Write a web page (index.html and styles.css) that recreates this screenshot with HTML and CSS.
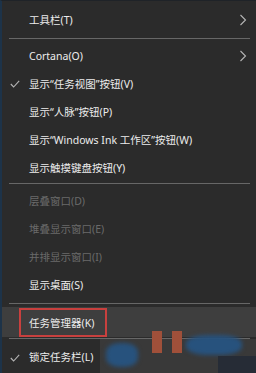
FILE: index.html
```html
<!DOCTYPE html>
<html lang="zh-CN">
<head>
    <meta charset="UTF-8">
    <title>任务栏菜单</title>
    <link rel="stylesheet" href="styles.css">
</head>
<body>
    <div class="menu">
        <div class="item first">工具栏(T)
            <svg class="arrow" width="8" height="12" viewBox="0 0 8 12"><polyline points="1.5,1 6.5,6 1.5,11" /></svg>
        </div>
        <div class="sep"></div>
        <div class="item">Cortana(O)
            <svg class="arrow" width="8" height="12" viewBox="0 0 8 12"><polyline points="1.5,1 6.5,6 1.5,11" /></svg>
        </div>
        <div class="item">
            <svg class="check" width="10" height="8" viewBox="0 0 10 8"><polyline points="0.8,4 3.6,7 9.2,0.8" /></svg>
            显示“任务视图”按钮(V)
        </div>
        <div class="item">显示“人脉”按钮(P)</div>
        <div class="item">显示“Windows Ink 工作区”按钮(W)</div>
        <div class="item">显示触摸键盘按钮(Y)</div>
        <div class="sep tight"></div>
        <div class="item off">层叠窗口(D)</div>
        <div class="item off">堆叠显示窗口(E)</div>
        <div class="item off">并排显示窗口(I)</div>
        <div class="item">显示桌面(S)</div>
        <div class="sep"></div>
        <div class="item hover"><span class="mark">任务管理器(K)</span></div>
        <div class="sep low"></div>
        <div class="item last">
            <svg class="check" width="10" height="8" viewBox="0 0 10 8"><polyline points="0.8,4 3.6,7 9.2,0.8" /></svg>
            锁定任务栏(L)
        </div>

        <div class="smudge">
            <div class="bar b1"></div>
            <div class="bar b2"></div>
            <div class="blob c1"></div>
            <div class="blob c2"></div>
            <div class="patch"></div>
        </div>
    </div>
</body>
</html>
```

FILE: styles.css
```css
body {
    margin: 0;
    background: #2b2b2b;
    font-family: "Noto Sans", "Noto Sans CJK SC", sans-serif;
}
.menu {
    position: relative;
    width: 256px;
    height: 373px;
    box-sizing: border-box;
    background: #2b2b2b;
    border-left: 2px solid #1d3349;
    border-top: 1px solid #1f2328;
    padding-top: 5px;
    overflow: hidden;
}
.item {
    position: relative;
    height: 28px;
    line-height: 28px;
    padding-left: 27px;
    font-size: 10.5px;
    color: #ededed;
    white-space: nowrap;
}
.item.off {
    color: #6a6a6a;
}
.sep {
    height: 1px;
    background: #676767;
    margin: 4px 6px 3px 7px;
}
.sep.tight {
    margin-top: 1px;
}
.sep.low {
    margin: 1px 6px 5px 7px;
}
.arrow {
    position: absolute;
    right: 9px;
    top: 8px;
}
.arrow polyline,
.check polyline {
    fill: none;
    stroke: #b5b5b5;
    stroke-width: 1.1;
}
.check {
    position: absolute;
    left: 8px;
    top: 10px;
}
.item.hover {
    height: 30px;
    line-height: 26px;
    background: #3e3e3e;
    padding-left: 17px;
}
.mark {
    display: inline-block;
    box-sizing: border-box;
    width: 88px;
    height: 29px;
    margin-top: 1px;
    padding-left: 8px;
    border: 2px solid #c8403e;
}
.item.last {
    line-height: 26px;
}
.smudge {
    position: absolute;
    left: 98px;
    top: 338px;
    width: 158px;
    height: 35px;
    background: #393939;
}
.bar {
    position: absolute;
    top: -8px;
    width: 10px;
    height: 22px;
    background: #a0503a;
}
.b1 { left: 52px; }
.b2 { left: 72px; }
.blob {
    position: absolute;
    background: #27527d;
    border-radius: 40%;
    filter: blur(2px);
}
.c1 {
    left: 86px;
    top: -4px;
    width: 56px;
    height: 20px;
}
.c2 {
    left: 6px;
    top: 4px;
    width: 32px;
    height: 24px;
}
.patch {
    position: absolute;
    right: 0;
    bottom: 0;
    width: 40px;
    height: 18px;
    background: #262c36;
}
```
